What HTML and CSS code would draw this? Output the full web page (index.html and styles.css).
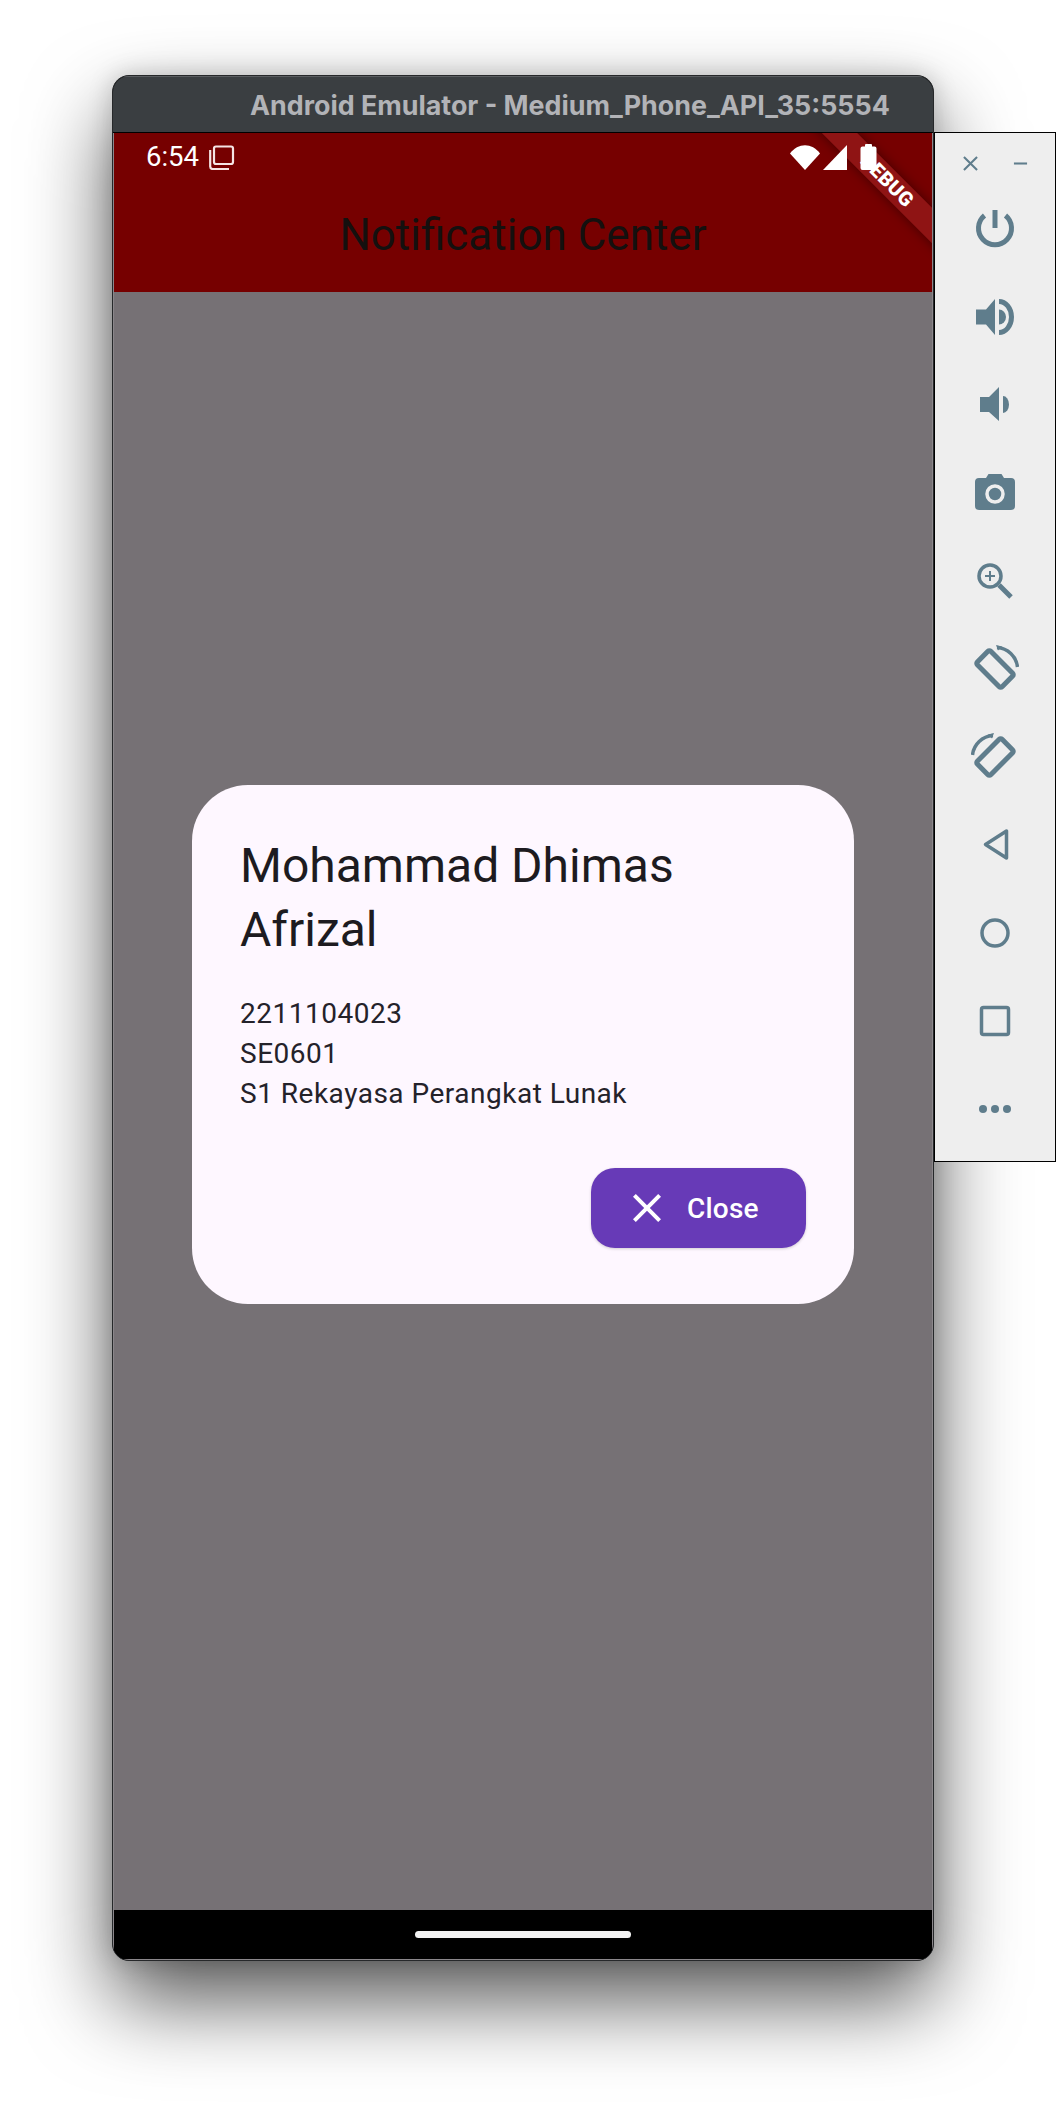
FILE: index.html
```html
<!DOCTYPE html>
<html lang="en">
<head>
<meta charset="utf-8">
<title>Android Emulator</title>
<link rel="stylesheet" href="styles.css">
</head>
<body>
<main class="desktop">
  <section class="window">
    <header class="titlebar">Android Emulator - Medium_Phone_API_35:5554</header>
    <div class="screen">
      <div class="appbar">
        <div class="statusbar">
          <span class="clock">6:54</span>
          <svg class="stack-icon" viewBox="0 0 26 26"><path d="M7 2.500h15a2 2 0 0 1 2 2V18a2 2 0 0 1-2 2H7a2 2 0 0 1-2-2V4.500a2 2 0 0 1 2-2z"/><path d="M1.200 6v16.500a2.500 2.500 0 0 0 2.500 2.500H20"/></svg>
          <span class="status-spacer"></span>
          <svg class="wifi-icon" viewBox="0 0 30 25"><path d="M0 8.500C8-2.500 22-2.500 30 8.500L15 25z"/></svg>
          <svg class="signal-icon" viewBox="0 0 24 25"><path d="M24 0v25H0z"/></svg>
          <svg class="battery-icon" viewBox="0 0 17 26"><path d="M5 2.500V1a1 1 0 0 1 1-1h5a1 1 0 0 1 1 1v1.500h2.500a2 2 0 0 1 2 2V24a2 2 0 0 1-2 2h-12a2 2 0 0 1-2-2V4.500a2 2 0 0 1 2-2z"/></svg>
        </div>
        <h1 class="apptitle">Notification Center</h1>
      </div>
      <div class="scrim"></div>
      <div class="navbar"><span class="home-pill"></span></div>
      <div class="ribbon-clip"><div class="ribbon">DEBUG</div></div>
      <div class="dialog-layer">
        <div class="dialog">
          <h2 class="dialog-title">Mohammad Dhimas Afrizal</h2>
          <div class="dialog-body">
            <p>2211104023</p>
            <p>SE0601</p>
            <p>S1 Rekayasa Perangkat Lunak</p>
          </div>
          <div class="dialog-actions">
            <button class="close-btn" type="button">
              <svg class="close-icon" viewBox="0 0 24 24"><path d="M19 6.410 17.590 5 12 10.590 6.410 5 5 6.410 10.590 12 5 17.590 6.410 19 12 13.410 17.590 19 19 17.590 13.410 12z"/></svg>
              <span>Close</span>
            </button>
          </div>
        </div>
      </div>
    </div>
  </section>
  <aside class="panel">
    <div class="panel-head">
      <svg class="win-icon" viewBox="0 0 16 16"><path d="M1 1l14 14M15 1 1 15"/></svg>
      <svg class="win-icon" viewBox="0 0 16 16"><path d="M1 8h14"/></svg>
    </div>
    <div class="tool"><svg class="line" viewBox="0 0 48 48"><path class="thick" d="M24 5v18"/><path class="thick" d="M13.500 10.500a16.500 16.500 0 1 0 21 0"/></svg></div>
    <div class="tool"><svg class="fill" viewBox="0 0 48 48"><path d="M5 16.500H15L24 6V42L15 31.500H5z"/><path d="M28 16.500a7 7.500 0 0 1 0 15z"/><path d="M28 6a15 18 0 0 1 0 36v-5a10 13 0 0 0 0-26z"/></svg></div>
    <div class="tool"><svg class="fill" viewBox="0 0 48 48"><path d="M9 16H18L28 6V40L18 31H9z"/><path d="M32 15a6 8.500 0 0 1 0 17z"/></svg></div>
    <div class="tool"><svg class="fill raise" viewBox="0 0 48 48"><path d="M8 9h7l2.500-4h13l2.500 4h7a4 4 0 0 1 4 4v24a4 4 0 0 1-4 4H8a4 4 0 0 1-4-4V13a4 4 0 0 1 4-4z"/><circle class="lens" cx="24" cy="25" r="8"/></svg></div>
    <div class="tool"><svg class="line" viewBox="0 0 48 48"><circle class="med" cx="19" cy="19" r="11"/><path class="thick" d="M28 28l12 12"/><path class="fine" d="M19 14v10M14 19h10"/></svg></div>
    <div class="tool"><svg class="line" viewBox="0 0 48 48"><rect class="phone" x="14.500" y="6.500" width="19" height="35" rx="2" transform="rotate(-45 24 24)"/><path class="med" d="M46.500 22A22 22 0 0 0 26 2.500"/><path class="arrow" d="M25 0l6 1.500-4 4z"/></svg></div>
    <div class="tool"><svg class="line" viewBox="0 0 48 48"><rect class="phone" x="14.500" y="6.500" width="19" height="35" rx="2" transform="rotate(45 24 24)"/><path class="med" d="M1.500 22A22 22 0 0 1 22 2.500"/><path class="arrow" d="M23 0l-6 1.500 4 4z"/></svg></div>
    <div class="tool"><svg class="line" viewBox="0 0 48 48"><path class="med round" d="M14.500 23.500 35.500 10v27z"/></svg></div>
    <div class="tool"><svg class="line" viewBox="0 0 48 48"><circle class="med" cx="24" cy="24" r="13"/></svg></div>
    <div class="tool"><svg class="line" viewBox="0 0 48 48"><rect class="med" x="10.500" y="10.500" width="27" height="27" rx="2"/></svg></div>
    <div class="tool"><svg class="fill" viewBox="0 0 48 48"><circle cx="12" cy="24" r="4"/><circle cx="24" cy="24" r="4"/><circle cx="36" cy="24" r="4"/></svg></div>
  </aside>
</main>
</body>
</html>
```
FILE: styles.css
```css
* { box-sizing: border-box; }
html, body { margin: 0; padding: 0; background: #fff; }
body { width: 1056px; height: 2108px; overflow: hidden; font-family: Roboto, "Noto Sans", sans-serif; }
h1, h2, p { margin: 0; font-weight: 400; }

.desktop { display: flex; align-items: flex-start; padding: 75px 0 0 112px; height: 100%; }

.window {
  width: 822px; height: 1886px; flex: none;
  display: flex; flex-direction: column;
  border: 1px solid #26282a; border-radius: 17px; overflow: hidden;
  background: #000;
  box-shadow: 0 40px 84px rgba(0,0,0,.66), 0 0 24px rgba(0,0,0,.18);
}
.titlebar {
  height: 57px; flex: none; padding-left: 137px;
  display: flex; align-items: center;
  background: #3a3e41; border-top: 1px solid #5a5d60; border-bottom: 1px solid #000;
  color: #b2b3b7; font: 700 26.850px Inter, sans-serif; white-space: nowrap;
}
.screen {
  flex: 1; position: relative; display: flex; flex-direction: column; overflow: hidden;
  border-left: 1px solid #8b878b; border-right: 1px solid #8b878b; border-bottom: 1px solid #8b878b;
}
.appbar { height: 159px; flex: none; background: #760000; display: flex; flex-direction: column; }
.statusbar { height: 48px; flex: none; display: flex; align-items: center; padding: 0 55px 0 32px; color: #fff; position: relative; z-index: 2; }
.clock { font-size: 27.500px; line-height: 48px; width: 63px; }
.stack-icon { width: 26px; height: 26px; fill: none; stroke: #f5e4e4; stroke-width: 2.200; }
.status-spacer { flex: 1; }
.wifi-icon { width: 30px; height: 25px; fill: #fff; }
.signal-icon { width: 24px; height: 25px; margin-left: 3px; fill: #fff; }
.battery-icon { width: 17px; height: 26px; margin-left: 13px; fill: #fff; }
.apptitle { text-align: center; font-size: 44px; line-height: 52px; margin-top: 28px; color: #14100f; }
.scrim { flex: 1; background: #767175; }
.navbar { height: 49px; flex: none; background: #000; display: flex; justify-content: center; padding-top: 21px; }
.home-pill { width: 216px; height: 7px; border-radius: 4px; background: #f2f2f2; }

.ribbon-clip { position: absolute; inset: 0; overflow: hidden; pointer-events: none; z-index: 1; }
.ribbon {
  position: absolute; left: 623px; top: 35px; width: 300px; height: 25px;
  transform: rotate(45deg);
  background: #8f1414; color: #fff; text-align: center;
  font: 900 20px/25px Roboto, sans-serif; letter-spacing: .3px;
  box-shadow: 0 0 12px rgba(0,0,0,.45);
}

.dialog-layer { position: absolute; inset: 0; display: flex; align-items: center; justify-content: center; z-index: 3; }
.dialog {
  width: 662px; height: 519px; margin-bottom: 3px;
  background: #fef7ff; border-radius: 56px;
  padding: 49px 48px 0; color: #1d1b20;
  display: flex; flex-direction: column;
}
.dialog-title { font-size: 48px; line-height: 64px; width: 540px; }
.dialog-body { margin-top: 32px; font-size: 28px; line-height: 40px; letter-spacing: .5px; color: #24222a; }
.dialog-actions { display: flex; justify-content: flex-end; margin-top: 54px; }
.close-btn {
  width: 215px; height: 80px; padding: 0 0 0 46px;
  display: flex; align-items: center; gap: 16px;
  background: #673ab7; border: 0; border-radius: 24px; color: #fff;
  font: 500 28px Roboto, sans-serif; letter-spacing: .2px;
  box-shadow: 0 1px 3px rgba(0,0,0,.18);
}
.close-icon { width: 48px; height: 48px; fill: #fff; margin-left: -14px; }

.panel {
  width: 122px; height: 1030px; flex: none; margin-top: 57px; position: relative;
  display: flex; flex-direction: column;
  background: #eee; border: 1px solid #000;
}
.panel-head { height: 52px; flex: none; display: flex; justify-content: space-between; align-items: center; padding: 8px 27px 0 28px; }
.win-icon { width: 15px; height: 15px; fill: none; stroke: #5f7d8c; stroke-width: 2.200; }
.tool { height: 88px; flex: none; display: flex; align-items: center; justify-content: center; }
.tool svg { width: 48px; height: 48px; }
.fill { fill: #5f7d8c; }
.line { fill: none; stroke: #5f7d8c; }
.lens { fill: #5f7d8c; stroke: #eee; stroke-width: 3.500; }
.thick { stroke-width: 5; }
.phone { stroke-width: 5; }
.med { stroke-width: 3.500; }
.fine { stroke-width: 2; }
.round { stroke-linejoin: round; }
.arrow { fill: #5f7d8c; stroke: none; }
```
